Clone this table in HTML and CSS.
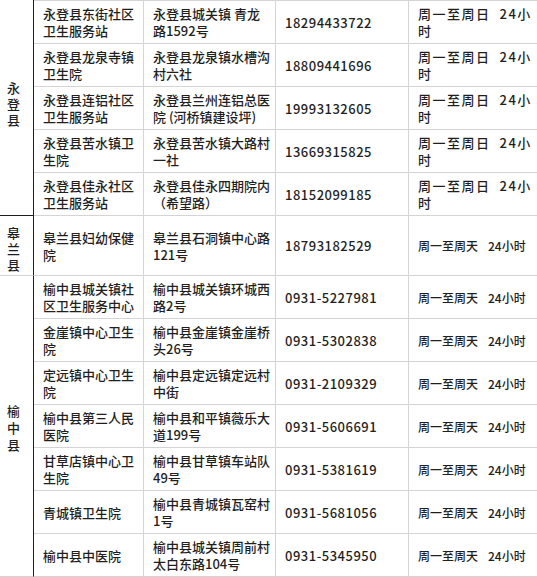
FILE: index.html
```html
<!DOCTYPE html>
<html lang="zh-CN">
<head>
<meta charset="utf-8">
<title>医疗机构</title>
<link rel="stylesheet" href="styles.css">
</head>
<body>
<div class="table">
  <div class="cell county yd">永<br>登<br>县</div>
  <div class="cell name top">永登县东街社区<br>卫生服务站</div>
  <div class="cell addr top">永登县城关镇 青龙<br>路1592号</div>
  <div class="cell tel top">18294433722</div>
  <div class="cell hours wide top"><div><span class="sp">周一至周日</span><span class="gap"></span><span class="sp">24小</span><br>时</div></div>

  <div class="cell name">永登县龙泉寺镇<br>卫生院</div>
  <div class="cell addr">永登县龙泉镇水槽沟<br>村六社</div>
  <div class="cell tel">18809441696</div>
  <div class="cell hours wide"><div><span class="sp">周一至周日</span><span class="gap"></span><span class="sp">24小</span><br>时</div></div>

  <div class="cell name">永登县连铝社区<br>卫生服务站</div>
  <div class="cell addr">永登县兰州连铝总医<br>院 (河桥镇建设坪)</div>
  <div class="cell tel">19993132605</div>
  <div class="cell hours wide"><div><span class="sp">周一至周日</span><span class="gap"></span><span class="sp">24小</span><br>时</div></div>

  <div class="cell name">永登县苦水镇卫<br>生院</div>
  <div class="cell addr">永登县苦水镇大路村<br>一社</div>
  <div class="cell tel">13669315825</div>
  <div class="cell hours wide"><div><span class="sp">周一至周日</span><span class="gap"></span><span class="sp">24小</span><br>时</div></div>

  <div class="cell name">永登县佳永社区<br>卫生服务站</div>
  <div class="cell addr">永登县佳永四期院内<br>（希望路）</div>
  <div class="cell tel">18152099185</div>
  <div class="cell hours wide"><div><span class="sp">周一至周日</span><span class="gap"></span><span class="sp">24小</span><br>时</div></div>

  <div class="cell county gl">皋<br>兰<br>县</div>
  <div class="cell name">皋兰县妇幼保健<br>院</div>
  <div class="cell addr">皋兰县石洞镇中心路<br>121号</div>
  <div class="cell tel">18793182529</div>
  <div class="cell hours">周一至周天<span class="gap2"></span>24小时</div>

  <div class="cell county yz">榆<br>中<br>县</div>
  <div class="cell name">榆中县城关镇社<br>区卫生服务中心</div>
  <div class="cell addr">榆中县城关镇环城西<br>路2号</div>
  <div class="cell tel">0931-5227981</div>
  <div class="cell hours">周一至周天<span class="gap2"></span>24小时</div>

  <div class="cell name">金崖镇中心卫生<br>院</div>
  <div class="cell addr">榆中县金崖镇金崖桥<br>头26号</div>
  <div class="cell tel">0931-5302838</div>
  <div class="cell hours">周一至周天<span class="gap2"></span>24小时</div>

  <div class="cell name">定远镇中心卫生<br>院</div>
  <div class="cell addr">榆中县定远镇定远村<br>中街</div>
  <div class="cell tel">0931-2109329</div>
  <div class="cell hours">周一至周天<span class="gap2"></span>24小时</div>

  <div class="cell name">榆中县第三人民<br>医院</div>
  <div class="cell addr">榆中县和平镇薇乐大<br>道199号</div>
  <div class="cell tel">0931-5606691</div>
  <div class="cell hours">周一至周天<span class="gap2"></span>24小时</div>

  <div class="cell name">甘草店镇中心卫<br>生院</div>
  <div class="cell addr">榆中县甘草镇车站队<br>49号</div>
  <div class="cell tel">0931-5381619</div>
  <div class="cell hours">周一至周天<span class="gap2"></span>24小时</div>

  <div class="cell name">青城镇卫生院</div>
  <div class="cell addr">榆中县青城镇瓦窑村<br>1号</div>
  <div class="cell tel">0931-5681056</div>
  <div class="cell hours">周一至周天<span class="gap2"></span>24小时</div>

  <div class="cell name">榆中县中医院</div>
  <div class="cell addr">榆中县城关镇周前村<br>太白东路104号</div>
  <div class="cell tel">0931-5345950</div>
  <div class="cell hours">周一至周天<span class="gap2"></span>24小时</div>
</div>
</body>
</html>
```

FILE: styles.css
```css
html, body {
  margin: 0;
  padding: 0;
  background: #ffffff;
  overflow: hidden;
}

.table {
  display: grid;
  grid-template-columns: 34px 110px 132px 133px 128px;
  grid-template-rows: 44px repeat(4, 43px) 60px repeat(7, 43px);
  font-family: "Noto Sans CJK SC", "Noto Sans", sans-serif;
  font-size: 13px;
  font-weight: 500;
  color: #1f1f1f;
  width: 537px;
}

.cell {
  box-sizing: border-box;
  display: flex;
  align-items: center;
  padding-left: 9px;
  border-right: 1px solid #d4d4d4;
  border-bottom: 1px solid #d4d4d4;
  line-height: 17px;
  white-space: nowrap;
}

.top {
  border-top: 1px solid #d4d4d4;
}

.county {
  grid-column: 1;
  justify-content: center;
  text-align: center;
  padding-left: 0;
  padding-right: 6px;
  line-height: 16px;
  border-right: 1px solid #1e1e1e;
}

.yd {
  grid-row: 1 / span 5;
  border-bottom: 1px solid #1e1e1e;
  padding-bottom: 8px;
}

.gl {
  grid-row: 6;
  padding-top: 6px;
}

.yz {
  grid-row: 7 / span 7;
  line-height: 17px;
  padding-top: 2px;
}

.name {
  grid-column: 2;
}

.tel {
  letter-spacing: 0.5px;
}

.hours {
  border-right: none;
  font-size: 12px;
}

.wide {
  font-size: 13px;
}

.sp {
  letter-spacing: 1.5px;
}

.gap {
  display: inline-block;
  width: 9px;
}

.gap2 {
  display: inline-block;
  width: 10px;
}
```
